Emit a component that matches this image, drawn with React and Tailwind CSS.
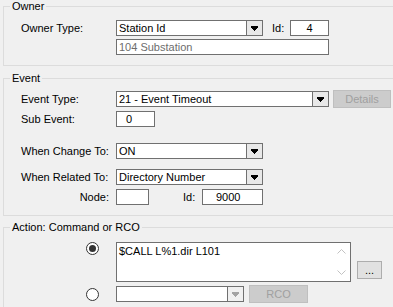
import React from "react";

const Arrow = ({ disabled }) => (
  <svg width="7" height="5" viewBox="0 0 7 5" shapeRendering="crispEdges">
    <path d="M0 0h7v2h-1v1h-1v1h-1v1h-1v-1h-1v-1h-1v-1h-1z" fill={disabled ? "#a3a3a3" : "#000"} />
  </svg>
);

const Combo = ({ width, value, disabled }) => (
  <div className={`flex h-[16px] shrink-0 ${width} border border-[#707070] bg-white`}>
    <span className="flex-1 truncate pl-[2px] leading-[14px]">{value}</span>
    <span className={`flex w-[16px] items-center justify-center border-l border-[#707070] ${disabled ? "bg-[#f0f0f0]" : "bg-[#e8e8e8]"}`}>
      <Arrow disabled={disabled} />
    </span>
  </div>
);

const Box = ({ className, children }) => (
  <div className={`h-[16px] shrink-0 border border-[#707070] bg-white leading-[14px] ${className}`}>
    {children}
  </div>
);

const Button = ({ className, disabled, children }) => (
  <button
    type="button"
    className={`flex h-[18px] shrink-0 items-center justify-center border leading-[13px] ${
      disabled ? "border-[#bfbfbf] bg-[#cccccc] text-[#a0a0a0]" : "border-[#adadad] bg-[#e1e1e1] text-black"
    } ${className}`}
  >
    {children}
  </button>
);

const Radio = ({ checked }) => (
  <span className="flex h-[13px] w-[13px] items-center justify-center rounded-full border border-[#333333] bg-white">
    {checked && <span className="h-[7px] w-[7px] rounded-full bg-[#333333]" />}
  </span>
);

const Group = ({ title, className, children }) => (
  <fieldset className={`ml-[3px] w-[420px] border border-[#dcdcdc] p-0 ${className}`}>
    <legend className="ml-[6px] px-[2px] leading-[13px]">{title}</legend>
    {children}
  </fieldset>
);

const Chevron = ({ up }) => (
  <svg width="9" height="5" viewBox="0 0 9 5">
    <path d={up ? "M0.5 4.5L4.5 0.5L8.5 4.5" : "M0.5 0.5L4.5 4.5L8.5 0.5"} stroke="#c2c2c2" fill="none" />
  </svg>
);

export default function App() {
  return (
    <div className="h-[307px] w-[393px] overflow-hidden bg-[#f0f0f0] font-['Liberation_Sans',Arial,sans-serif] text-[11px] leading-[13px] text-black">
      {/* Owner */}
      <Group title="Owner">
        <div className="flex flex-col gap-[3px] pb-[10px] pl-[17px] pt-[7px]">
          <div className="flex h-[16px] items-center">
            <span className="w-[95px] shrink-0">Owner Type:</span>
            <Combo width="w-[147px]" value="Station Id" />
            <span className="ml-[9px] w-[18px] shrink-0">Id:</span>
            <Box className="w-[39px] text-center">4</Box>
          </div>
          <div className="flex h-[16px]">
            <div className="w-[95px] shrink-0" />
            <Box className="w-[213px] pl-[2px] text-[#6d6d6d]">104 Substation</Box>
          </div>
        </div>
      </Group>

      {/* Event */}
      <Group title="Event" className="mt-[6px]">
        <div className="flex flex-col pb-[10px] pl-[17px] pt-[6px]">
          <div className="flex h-[16px] items-center">
            <span className="w-[95px] shrink-0">Event Type:</span>
            <Combo width="w-[213px]" value="21 - Event Timeout" />
            <Button disabled className="ml-[4px] w-[58px]">Details</Button>
          </div>
          <div className="mt-[4px] flex h-[16px] items-center">
            <span className="w-[95px] shrink-0">Sub Event:</span>
            <Box className="w-[39px] pl-[9px]">0</Box>
          </div>
          <div className="mt-[16px] flex h-[16px] items-center">
            <span className="w-[95px] shrink-0">When Change To:</span>
            <Combo width="w-[147px]" value="ON" />
          </div>
          <div className="mt-[10px] flex h-[16px] items-center">
            <span className="w-[95px] shrink-0">When Related To:</span>
            <Combo width="w-[147px]" value="Directory Number" />
          </div>
          <div className="mt-[4px] flex h-[16px] items-center">
            <span className="w-[95px] shrink-0 pr-[7px] text-right">Node:</span>
            <Box className="w-[33px]" />
            <span className="ml-[34px] w-[19px] shrink-0">Id:</span>
            <Box className="w-[61px] pl-[13px]">9000</Box>
          </div>
        </div>
      </Group>

      {/* Action */}
      <Group title="Action: Command or RCO" className="mt-[5px]">
        <div className="flex flex-col pb-[10px] pl-[17px] pt-[8px]">
          <div className="flex">
            <div className="w-[95px] shrink-0 pl-[65px]">
              <Radio checked />
            </div>
            <div className="flex h-[40px] w-[235px] shrink-0 border border-[#707070] bg-white">
              <span className="flex-1 pl-[2px] pt-[2px]">$CALL L%1.dir L101</span>
              <div className="flex w-[17px] flex-col items-center justify-between py-[6px]">
                <Chevron up />
                <Chevron />
              </div>
            </div>
            <Button className="mb-[3px] ml-[6px] w-[25px] self-end">...</Button>
          </div>
          <div className="mt-[4px] flex h-[16px] items-center">
            <div className="w-[95px] shrink-0 pl-[65px]">
              <Radio />
            </div>
            <Combo width="w-[128px]" value="" disabled />
            <Button disabled className="ml-[5px] w-[59px]">RCO</Button>
          </div>
        </div>
      </Group>
    </div>
  );
}
